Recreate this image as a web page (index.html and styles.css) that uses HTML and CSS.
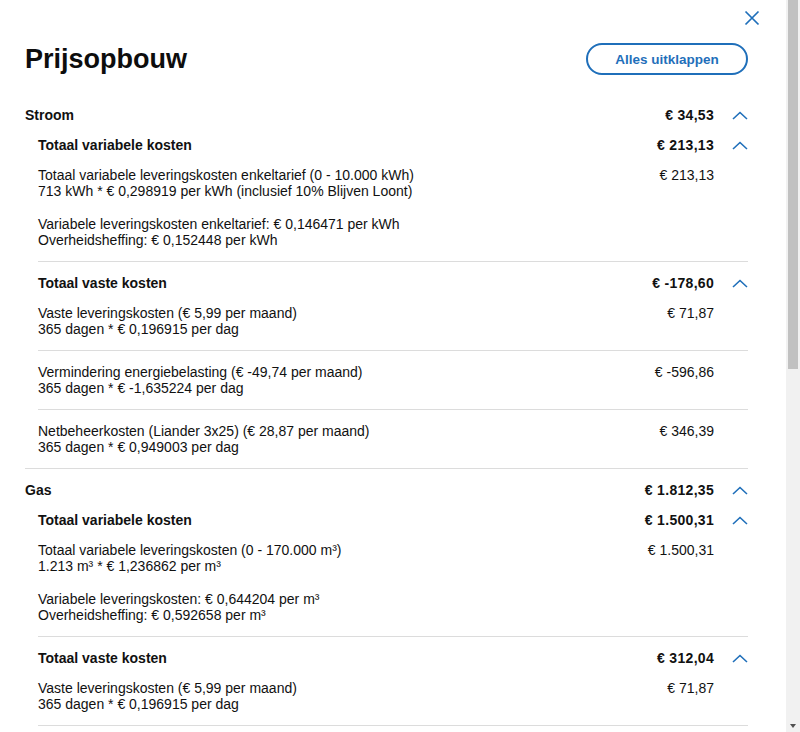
FILE: index.html
```html
<!DOCTYPE html>
<html>
<head>
    <title>Prijsopbouw</title>
    <meta name="viewport" content="width=device-width, initial-scale=1.0">
    <link rel="stylesheet" href="styles.css">
</head>
<body>
    <div class="page">
        <div class="panel">
            <div class="topbar">
                <button class="close" aria-label="Sluiten">
                    <svg width="16" height="16" viewBox="0 0 16 16"><path d="M1.5 1.5 L14.5 14.5 M14.5 1.5 L1.5 14.5" stroke="#1f6fba" stroke-width="1.7" fill="none"/></svg>
                </button>
            </div>

            <div class="content">
                <div class="title-row">
                    <h1>Prijsopbouw</h1>
                    <button class="expand">Alles uitklappen</button>
                </div>

                <!-- Stroom -->
                <section class="group">
                    <div class="row group-head">
                        <span class="label">Stroom</span>
                        <span class="amount">€ 34,53</span>
                        <span class="toggle"><svg width="16" height="9" viewBox="0 0 16 9"><polyline points="1,8 8,1.5 15,8" stroke="#1f6fba" stroke-width="1.6" fill="none"/></svg></span>
                    </div>

                    <div class="sub">
                        <div class="row sub-head">
                            <span class="label">Totaal variabele kosten</span>
                            <span class="amount">€ 213,13</span>
                            <span class="toggle"><svg width="16" height="9" viewBox="0 0 16 9"><polyline points="1,8 8,1.5 15,8" stroke="#1f6fba" stroke-width="1.6" fill="none"/></svg></span>
                        </div>
                        <div class="item">
                            <div class="item-text">
                                <p>Totaal variabele leveringskosten enkeltarief (0 - 10.000 kWh)<br>713 kWh * € 0,298919 per kWh (inclusief 10% Blijven Loont)</p>
                                <p>Variabele leveringskosten enkeltarief: € 0,146471 per kWh<br>Overheidsheffing: € 0,152448 per kWh</p>
                            </div>
                            <span class="amount">€ 213,13</span>
                            <span class="toggle"></span>
                        </div>
                    </div>

                    <div class="sub">
                        <div class="row sub-head">
                            <span class="label">Totaal vaste kosten</span>
                            <span class="amount">€ -178,60</span>
                            <span class="toggle"><svg width="16" height="9" viewBox="0 0 16 9"><polyline points="1,8 8,1.5 15,8" stroke="#1f6fba" stroke-width="1.6" fill="none"/></svg></span>
                        </div>
                        <div class="item">
                            <div class="item-text">
                                <p>Vaste leveringskosten (€ 5,99 per maand)<br>365 dagen * € 0,196915 per dag</p>
                            </div>
                            <span class="amount">€ 71,87</span>
                            <span class="toggle"></span>
                        </div>
                        <div class="item">
                            <div class="item-text">
                                <p>Vermindering energiebelasting (€ -49,74 per maand)<br>365 dagen * € -1,635224 per dag</p>
                            </div>
                            <span class="amount">€ -596,86</span>
                            <span class="toggle"></span>
                        </div>
                        <div class="item last">
                            <div class="item-text">
                                <p>Netbeheerkosten (Liander 3x25) (€ 28,87 per maand)<br>365 dagen * € 0,949003 per dag</p>
                            </div>
                            <span class="amount">€ 346,39</span>
                            <span class="toggle"></span>
                        </div>
                    </div>
                </section>

                <!-- Gas (loopt door onder de vouw) -->
                <section class="group continues">
                    <div class="row group-head">
                        <span class="label">Gas</span>
                        <span class="amount">€ 1.812,35</span>
                        <span class="toggle"><svg width="16" height="9" viewBox="0 0 16 9"><polyline points="1,8 8,1.5 15,8" stroke="#1f6fba" stroke-width="1.6" fill="none"/></svg></span>
                    </div>

                    <div class="sub">
                        <div class="row sub-head">
                            <span class="label">Totaal variabele kosten</span>
                            <span class="amount">€ 1.500,31</span>
                            <span class="toggle"><svg width="16" height="9" viewBox="0 0 16 9"><polyline points="1,8 8,1.5 15,8" stroke="#1f6fba" stroke-width="1.6" fill="none"/></svg></span>
                        </div>
                        <div class="item">
                            <div class="item-text">
                                <p>Totaal variabele leveringskosten (0 - 170.000 m³)<br>1.213 m³ * € 1,236862 per m³</p>
                                <p>Variabele leveringskosten: € 0,644204 per m³<br>Overheidsheffing: € 0,592658 per m³</p>
                            </div>
                            <span class="amount">€ 1.500,31</span>
                            <span class="toggle"></span>
                        </div>
                    </div>

                    <div class="sub">
                        <div class="row sub-head">
                            <span class="label">Totaal vaste kosten</span>
                            <span class="amount">€ 312,04</span>
                            <span class="toggle"><svg width="16" height="9" viewBox="0 0 16 9"><polyline points="1,8 8,1.5 15,8" stroke="#1f6fba" stroke-width="1.6" fill="none"/></svg></span>
                        </div>
                        <div class="item">
                            <div class="item-text">
                                <p>Vaste leveringskosten (€ 5,99 per maand)<br>365 dagen * € 0,196915 per dag</p>
                            </div>
                            <span class="amount">€ 71,87</span>
                            <span class="toggle"></span>
                        </div>
                    </div>
                </section>
            </div>
        </div>

        <div class="scrollbar">
            <div class="thumb"></div>
            <div class="arrow-down"></div>
        </div>
    </div>
</body>
</html>
```

FILE: styles.css
```css
body {
    margin: 0;
    font-family: "Liberation Sans", Arial, sans-serif;
    color: #111;
    background: #fff;
}
.page {
    display: flex;
    height: 100vh;
    overflow: hidden;
}
.panel {
    flex: 1;
    overflow: hidden;
    background: #fff;
}
.scrollbar {
    width: 14px;
    flex-shrink: 0;
    background: #f1f1f1;
    display: flex;
    flex-direction: column;
    justify-content: space-between;
    align-items: center;
}
.thumb {
    width: 10px;
    height: 369px;
    background: #c1c1c1;
}
.arrow-down {
    width: 0;
    height: 0;
    border-left: 3px solid transparent;
    border-right: 3px solid transparent;
    border-top: 4px solid #505050;
    margin-bottom: 4px;
}
.topbar {
    display: flex;
    justify-content: flex-end;
    padding: 10px 26px 0 0;
}
.close {
    width: 16px;
    height: 16px;
    padding: 0;
    border: none;
    background: none;
    cursor: pointer;
    display: block;
}
.close svg {
    display: block;
}
.content {
    padding: 0 38px 0 25px;
}
.title-row {
    display: flex;
    align-items: center;
    justify-content: space-between;
    margin: 17px 0 19px;
}
h1 {
    margin: 0;
    font-size: 27px;
    line-height: 32px;
    font-weight: 700;
    color: #0d0d0d;
}
.expand {
    width: 162px;
    height: 32px;
    border: 2px solid #1f6fba;
    border-radius: 16px;
    background: #fff;
    color: #1f6fba;
    font-family: "Liberation Sans", Arial, sans-serif;
    font-size: 13.5px;
    font-weight: 700;
    cursor: pointer;
}
.group {
    border-bottom: 1px solid #dcdcdc;
}
.group.continues {
    border-bottom: none;
}
.row {
    display: flex;
    align-items: center;
    line-height: 18px;
    font-size: 14px;
    font-weight: 700;
}
.row .amount {
    letter-spacing: 0.3px;
}
.group-head {
    padding-top: 12px;
}
.sub {
    margin-left: 13px;
}
.sub-head {
    padding-top: 12px;
}
.label {
    flex: 1;
}
.amount {
    white-space: nowrap;
}
.toggle {
    width: 34px;
    display: flex;
    justify-content: flex-end;
    flex-shrink: 0;
}
.toggle svg {
    display: block;
}
.item {
    display: flex;
    align-items: flex-start;
    padding: 13px 0;
    border-bottom: 1px solid #dcdcdc;
    font-size: 14px;
    line-height: 16px;
}
.item.last {
    border-bottom: none;
}
.item-text {
    flex: 1;
}
.item-text p {
    margin: 0;
}
.item-text p + p {
    margin-top: 17px;
}
```
